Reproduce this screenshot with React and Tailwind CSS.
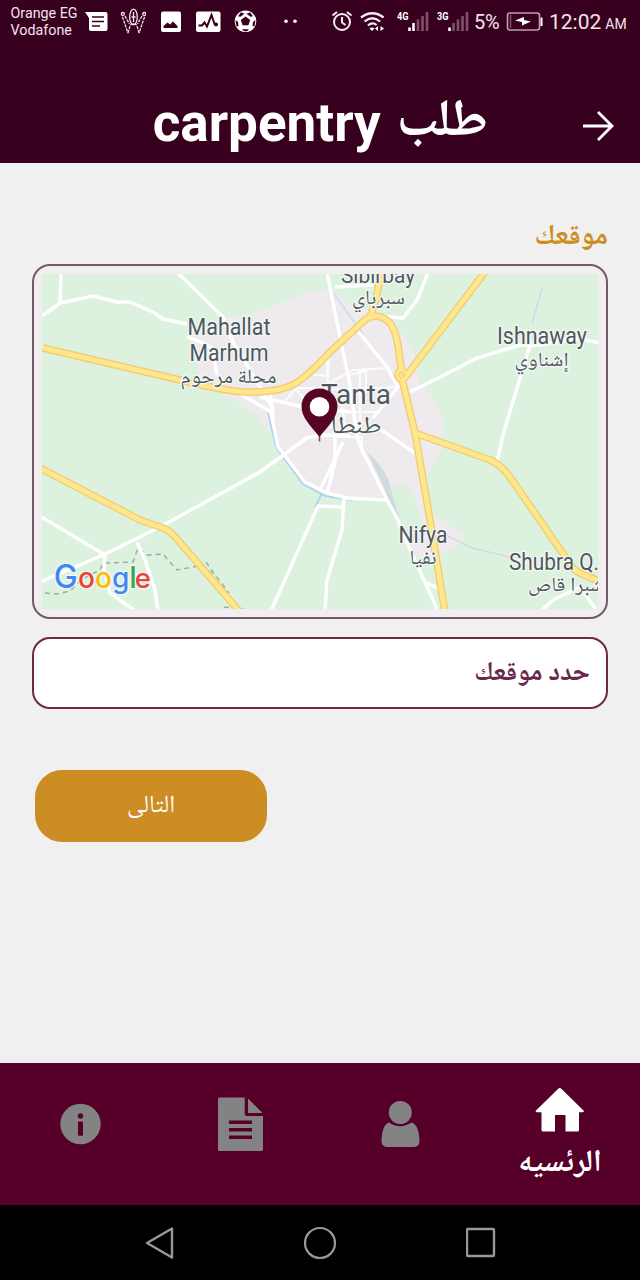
import React from "react";

const naskh = "font-['Noto_Naskh_Arabic','Noto_Sans_Arabic','DejaVu_Sans',sans-serif]";

function StatusBar() {
  return (
    <div className="flex h-[43px] items-start text-[#f3e3ea]">
      <div className="mt-[5px] ml-[10.5px] w-[74.5px] text-[14.3px] leading-[16.5px] whitespace-nowrap">
        <div>Orange EG</div>
        <div>Vodafone</div>
      </div>
      <svg className="h-[43px] w-[23px] shrink-0" viewBox="85 0 23 43">
        <path d="M85 12h20.500q2 0 2 2v15q0 2-2 2H91q-2 0-2-2V18z" fill="#fff" />
        <path d="M92 17h12M92 21.500h12M92 26h8" stroke="#38001f" strokeWidth="1.600" />
      </svg>
      <svg className="ml-[12px] h-[43px] w-[26px] shrink-0" viewBox="120 0 26 43">
        <g fill="none" stroke="#f3e3ea" strokeWidth="1.300">
          <circle cx="122.800" cy="14" r="1.500" />
          <circle cx="144.200" cy="14" r="1.500" />
          <path d="M122.500 17l5.500 16M125 16l4.500 8M144.500 17l-5.500 16M142 16l-4.500 8M128 33l2-7M139 33l-2-7" strokeDasharray="3 1" />
          <ellipse cx="133.500" cy="17" rx="3.800" ry="7.800" />
          <path d="M133.500 12v10M131.500 17h4M130 25l3.500-1 3.500 1" />
        </g>
      </svg>
      <svg className="ml-[15px] h-[43px] w-[20px] shrink-0" viewBox="161 0 20 43">
        <rect x="161" y="11.500" width="20" height="20.500" rx="2" fill="#fff" />
        <path d="M163.500 28v-2l4-3.500 2.500 2 3-3 4.500 4.500v2z" fill="#38001f" />
      </svg>
      <svg className="ml-[15px] h-[43px] w-[25px] shrink-0" viewBox="196 0 25 43">
        <rect x="196" y="11.500" width="24.500" height="20.500" rx="2" fill="#fff" />
        <path d="M198.500 25.500h3.500l2.500-3 2.500 4 4.500-11.500 3 9 2 .5" fill="none" stroke="#38001f" strokeWidth="2" />
        <circle cx="216" cy="24.500" r="2" fill="#38001f" />
      </svg>
      <svg className="ml-[13px] h-[43px] w-[23px] shrink-0" viewBox="234 0 23 43">
        <circle cx="245.500" cy="21.300" r="10.800" fill="#fff" />
        <g fill="#38001f">
          <path d="M245.500 16.500l4.700 3.500-1.800 5.300h-5.800l-1.800-5.300z" />
          <path d="M241 12.200l3.500 1.500-4 3-2.500-.5zM250 12.200l-3.500 1.500 4 3 2.500-.5zM235.500 20l2.500 2 .5 4-2 .500zM255.500 20l-2.500 2-.5 4 2 .500zM242 29.300h7l-2 2h-3z" />
        </g>
      </svg>
      <svg className="ml-[25px] h-[43px] w-[18px] shrink-0" viewBox="282 0 18 43" fill="#fff">
        <circle cx="286" cy="21.300" r="1.800" />
        <circle cx="295" cy="21.300" r="1.800" />
      </svg>
      <svg className="ml-[31px] h-[43px] w-[22px] shrink-0" viewBox="331 0 22 43" fill="none" stroke="#f6eaf0" strokeWidth="2">
        <circle cx="342" cy="22" r="8" />
        <path d="M342 17v5.500l3.500 2.500M332.500 15.500l4.500-3.500M351.500 15.500L347 12" />
      </svg>
      <svg className="ml-[7px] h-[43px] w-[25px] shrink-0" viewBox="360 0 25 43" fill="none" stroke="#f6eaf0" strokeWidth="2.200">
        <path d="M361 17.500q11.300-8.500 22.600 0M364.500 21.500q7.800-6.500 15.600 0M368 25.500q4.300-4 8.600-.5" />
        <path d="M369.500 28.500q2.500-2 5 0L372 31z" fill="#fff" stroke="none" />
        <path d="M378 26l-3 2.500 3 2.500zM380.500 26l3.500 2.500-3.500 2.500z" fill="#fff" stroke="none" />
      </svg>
      <svg className="ml-[11px] h-[43px] w-[34px] shrink-0" viewBox="396 0 34 43">
        <text x="397" y="20" fontSize="11" fontWeight="700" fill="#fff" textLength="11.500" lengthAdjust="spacingAndGlyphs">4G</text>
        <path d="M409.500 27.500v3.500M413.500 23v8" stroke="#fff" strokeWidth="2.600" />
        <path d="M418 19.500v11.500M422.500 16v15M427 12v19" stroke="#80506a" strokeWidth="2.600" />
      </svg>
      <svg className="ml-[6px] h-[43px] w-[34px] shrink-0" viewBox="436 0 34 43">
        <text x="437" y="20" fontSize="11" fontWeight="700" fill="#fff" textLength="11.500" lengthAdjust="spacingAndGlyphs">3G</text>
        <path d="M449.500 27.500v3.500" stroke="#fff" strokeWidth="2.600" />
        <path d="M453.500 23v8M458 19.500v11.500M462.500 16v15M467 12v19" stroke="#80506a" strokeWidth="2.600" />
      </svg>
      <div className="ml-[4px] w-[32px] text-[20px] leading-[44px] tracking-[-0.3px]">5%</div>
      <svg className="h-[43px] w-[38px] shrink-0" viewBox="506 0 38 43">
        <rect x="507.500" y="13" width="32" height="17" rx="2.500" fill="none" stroke="#bd9dad" strokeWidth="1.600" />
        <path d="M510.500 15v13" stroke="#80506a" strokeWidth="1.500" />
        <path d="M541.500 17.500v8.500" stroke="#fff" strokeWidth="2" />
        <path d="M515 20.500l9-3.500v3l7 1.500-9 4v-3.500z" fill="#fff" />
      </svg>
      <div className="ml-[5px] flex items-baseline whitespace-nowrap leading-[44px]">
        <span className="text-[21px]">12:02</span>
        <span className="ml-[4px] text-[14px]">AM</span>
      </div>
    </div>
  );
}

const highways = [
  "M43 348L180 380Q220 390 243 392Q280 393 296 383Q310 374 330 352L366 319Q378 312 389 322Q395 328 398 345L403 383L415 433L430 520L445 612",
  "M381 272L376 300L370 317",
  "M485 272L404 379",
  "M415 433L490 460Q500 463 512 480L573 568Q578 574 600 581",
  "M40 468L140 520L160 527Q170 530 177 539L239 611",
];

const roads = [
  "M42 316L60 303L93 296L117 302L130 302L153 312L163 319L187 324M187 337L203 343L212 348L217 375",
  "M61 273L60 303",
  "M178 273L223 317L233 342L260 387L274 410",
  "M327 273L340 337L350 385L357 437L363 452L387 500L398 520L400 527L438 611",
  "M335 287L373 285M428 273L417 300L403 318L380 316",
  "M357 330L387 367L398 387L373 418",
  "M410 392L440 377L477 358L520 345L540 345L575 338L600 343",
  "M530 345L520 378L503 435L497 462",
  "M40 582L103 555L160 527L260 472L307 438L320 435L350 436",
  "M240 394L270 411L272 417L278 447L305 482L327 493L347 498L385 500",
  "M270 393L273 417M260 397L303 407L350 412",
  "M40 516L105 555L104 570L110 593L134 610",
  "M137 542L145 560L155 590L158 611",
  "M271 611L318 506L342 507M344 498L342 530L327 580L325 611",
  "M343 442L320 490M335 437L335 463L327 493",
  "M377 427L415 453",
  "M541 611L553 600L580 587L597 611M427 583L437 588",
];

const streets =
  "M326 353L328 385M293 388L320 388L353 370L390 368M308 374L330 376M285 401L296 389L308 404M322 390L398 387M350 375L366 371L366 387M360 370V420M357 437L361 415M335 437L362 437V450M345 412L380 412M330 350L328 372M340 395L346 430";

const halo = { paintOrder: "stroke", stroke: "#f4f8f5", strokeWidth: 2.5, strokeLinejoin: "round" };

const labels = [
  ["Mahallat", 187.5, 334.5, 23, 83],
  ["Marhum", 189.5, 360.5, 23, 79],
  ["Sibirbay", 341, 282.500, 22.5, 74],
  ["Ishnaway", 497, 343.5, 23, 90],
  ["Nifya", 398.500, 542.5, 23, 49],
  ["Shubra Q.", 509, 569.5, 23, 90],
  ["Tanta", 321, 404, 28.5, 70],
];

const arabicLabels = [
  ["محلة مرحوم", 228.5, 383, 20, 96],
  ["سبرباي", 378.5, 304, 20, 53],
  ["إشناوي", 541.500, 366, 20, 54],
  ["طنطا", 356, 433, 24, 51],
  ["نفيا", 423, 564, 20, 27],
  ["شبرا قاص", 566, 591, 20, 76],
];

const brandLetters = [
  ["G", 53.8, 32, "#4285f4"],
  ["o", 78, 28, "#ea4335"],
  ["o", 95, 28, "#fbbc05"],
  ["g", 112, 28, "#4285f4"],
  ["l", 129.3, 30, "#34a853"],
  ["e", 134.8, 27.5, "#ea4335"],
];

function LocationMap() {
  return (
    <svg className="block h-[335px] w-[556px]" viewBox="42 274 556 335">
      <rect x="42" y="274" width="556" height="335" fill="#dcf2df" />
      <path
        d="M187 335Q205 330 223 318Q245 317 275 306Q305 290 333 289Q355 315 375 308Q400 325 410 345Q420 365 418 380Q436 400 443 420Q447 445 432 467Q418 485 425 515Q445 518 463 535Q465 546 447 550Q437 562 415 555Q405 540 425 530L410 487Q395 482 388 490L380 499L340 497L305 482L278 447Q268 430 258 417Q240 403 218 392Q200 385 197 370Q200 350 187 335Z"
        fill="#eeeaee"
      />
      <path d="M367 452Q388 470 391 490L401 524L398 524Q384 485 367 452Z" fill="#d2dbdc" />
      <path d="M448 536L472 548L510 557" fill="none" stroke="#cfdcda" strokeWidth="1.600" />
      <g fill="none" stroke="#c4dcef" strokeWidth="1.300">
        <path d="M334 294L363 334M542 288L532 324" />
        <path d="M268 413L276 447L303 484L325 496L352 500M322 493L315 508" stroke="#b0d3f0" strokeWidth="1.800" />
      </g>
      <path
        d="M45 593L57 594L70 591L82 579L100 570L103 563L133 562L138 548L147 555L163 554L177 570L203 565L213 575L220 587L228 595M206 562L216 576L229 593M224 607L248 610"
        fill="none"
        stroke="#a2aaa3"
        strokeWidth="1.500"
        strokeDasharray="5 4"
      />
      <path d={streets} fill="none" stroke="#fbfbfc" strokeWidth="2.200" />
      {roads.map((d) => (
        <path key={d} d={d} fill="none" stroke="#fff" strokeWidth="3.400" strokeLinejoin="round" />
      ))}
      {highways.map((d) => (
        <path key={d} d={d} fill="none" stroke="#f1ce72" strokeWidth="7.600" strokeLinejoin="round" />
      ))}
      <circle cx="401.500" cy="375" r="7" fill="#fde68b" stroke="#f1ce72" strokeWidth="1.500" />
      {highways.map((d) => (
        <path key={d} d={d} fill="none" stroke="#ffe78e" strokeWidth="4.800" strokeLinejoin="round" />
      ))}
      <circle cx="401.500" cy="375" r="3" fill="#fbe194" stroke="#f1ce72" />
      <g fill="#4f575e" style={halo}>
        {labels.map(([t, x, y, s, w]) => (
          <text key={t} x={x} y={y} fontSize={s} textLength={w} lengthAdjust="spacingAndGlyphs">
            {t}
          </text>
        ))}
        {arabicLabels.map(([t, x, y, s, w]) => (
          <text key={t} x={x} y={y} fontSize={s} textAnchor="middle" textLength={w} lengthAdjust="spacingAndGlyphs" className={naskh}>
            {t}
          </text>
        ))}
      </g>
      <text y="588" fontWeight="500" className="font-['Inter',sans-serif]" style={halo}>
        {brandLetters.map(([c, x, s, fill]) => (
          <tspan key={x} x={x} fontSize={s} fill={fill}>
            {c}
          </tspan>
        ))}
      </text>
      <path d="M319.500 434v7.500" stroke="#6b5a62" strokeWidth="1.600" />
      <circle cx="319.500" cy="407" r="10.500" fill="#fff" />
      <path
        fillRule="evenodd"
        fill="#560525"
        d="M319.500 388.500c-10 0-18 8-18 18 0 11 9 19 18 30.500 9-11.500 18-19.500 18-30.500 0-10-8-18-18-18zm0 8.500a9.800 9.800 0 1 1 0 19.600 9.800 9.800 0 0 1 0-19.600z"
      />
    </svg>
  );
}

function TabBar() {
  return (
    <nav className="grid h-[142px] grid-cols-4 bg-[#560029]">
      <svg className="h-[142px] w-[160px]" viewBox="0 1063 160 142">
        <circle cx="80.500" cy="1124" r="20.200" fill="#838383" />
        <circle cx="80.500" cy="1116" r="2.700" fill="#560029" />
        <rect x="78" y="1121.500" width="5" height="14.200" rx=".8" fill="#560029" />
      </svg>
      <svg className="h-[142px] w-[160px]" viewBox="160 1063 160 142">
        <path d="M219.500 1097.500H244.700V1114q0 2 2 2H263V1149.500q0 1.500-1.500 1.500H219.500q-1.500 0-1.500-1.500V1099q0-1.500 1.500-1.500zM248 1098.500L262.500 1113H248z" fill="#838383" />
        <path d="M229 1122.300h23M229 1129.800h23M229 1137.300h23" stroke="#560029" strokeWidth="3.400" />
      </svg>
      <svg className="h-[142px] w-[160px]" viewBox="320 1063 160 142">
        <path d="M389 1122.500Q400 1130 411.500 1122.500Q419 1125 419.500 1141Q419.500 1147 413 1147H388Q381.500 1147 381.500 1141Q382 1125 389 1122.500Z" fill="#838383" />
        <circle cx="400.300" cy="1112.500" r="11.500" fill="#838383" />
      </svg>
      <div className="flex flex-col items-center text-white">
        <svg className="h-[77px] w-[160px]" viewBox="480 1063 160 77">
          <path d="M558 1089q1.800-1.800 3.600 0L583.500 1110.500q1 1.700-1 1.700H579V1130q0 1.500-1.500 1.500H565.500V1115H555V1131.500H543q-1.500 0-1.500-1.500V1112.200H537q-2 0-1-1.700z" fill="#fff" />
        </svg>
        <div dir="rtl" className={`mt-[3px] text-[31px] leading-[44px] font-bold whitespace-nowrap ${naskh}`}>الرئسيه</div>
      </div>
    </nav>
  );
}

function SystemNav() {
  return (
    <div className="flex h-[75px] items-center justify-center gap-[130px] bg-black">
      <svg className="h-[34px] w-[30px]" viewBox="0 0 30 34" fill="none" stroke="#989898" strokeWidth="2.400" strokeLinejoin="round">
        <path d="M28 2.500v29L3 17z" />
      </svg>
      <svg className="h-[34px] w-[32px]" viewBox="0 0 32 34" fill="none" stroke="#989898" strokeWidth="2.200">
        <circle cx="16" cy="17" r="15" />
      </svg>
      <svg className="h-[34px] w-[30px]" viewBox="0 0 30 34" fill="none" stroke="#989898" strokeWidth="2.400">
        <rect x="1" y="3" width="27" height="27" rx="1" />
      </svg>
    </div>
  );
}

export default function App() {
  return (
    <div className="flex h-[1280px] w-[640px] flex-col overflow-hidden bg-[#f0f0f0] font-['Roboto',sans-serif]">
      <header className="h-[163px] bg-[#38001f]">
        <StatusBar />
        <div dir="rtl" className="flex items-start pt-[50px] pr-[26px] text-white">
          <svg className="mt-[16.5px] h-[32px] w-[32px] shrink-0" viewBox="0 0 32 32" fill="none" stroke="#fff" strokeWidth="2.800">
            <path d="M1 16h28M16 2l14 14-14 14" />
          </svg>
          <h1 className="mr-[94px] flex h-[60px] items-start gap-[16px] text-[53px] leading-[60px] font-bold whitespace-nowrap">
            <span className={`mt-[1px] text-[52px] ${naskh}`}>طلب</span>
            <span dir="ltr">carpentry</span>
          </h1>
        </div>
      </header>

      <main className="flex-1 px-8 pt-[55px]" dir="rtl">
        <h2 className={`h-[46px] text-[28.5px] leading-[40px] font-bold text-[#cc8e24] ${naskh}`}>موقعك</h2>
        <div dir="ltr" className="flex h-[355px] items-center justify-center rounded-[18px] border-2 border-[#745a66] bg-[#f0eef0]">
          <LocationMap />
        </div>
        <div className="mt-[18px] flex h-[72px] items-center rounded-[18px] border-2 border-[#6b2848] bg-white px-4 pt-[3px]">
          <span className={`text-[26.5px] leading-[40px] font-bold text-[#6b2848] ${naskh}`}>حدد موقعك</span>
        </div>
        <div dir="ltr" className="mt-[61px] pl-[3px]">
          <button className={`h-[72px] w-[232px] rounded-[27px] bg-[#cc8e24] pt-[2px] text-[24.5px] text-white ${naskh}`}>التالى</button>
        </div>
      </main>

      <TabBar />
      <SystemNav />
    </div>
  );
}
